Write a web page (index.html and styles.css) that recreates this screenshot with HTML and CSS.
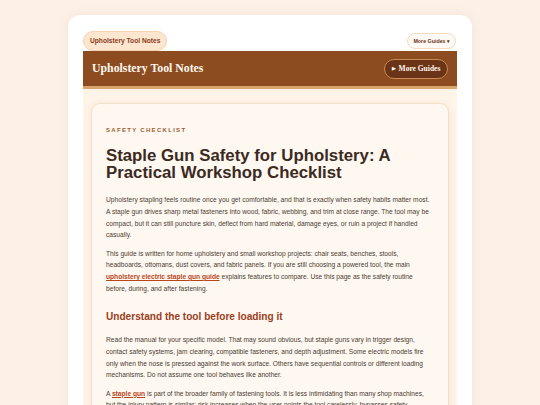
FILE: index.html
```html
<!DOCTYPE html>
<html lang="en">
<head>
<meta charset="utf-8">
<title>Staple Gun Safety for Upholstery</title>
<link rel="stylesheet" href="styles.css">
</head>
<body>
<div class="page">
  <div class="topbar">
    <a class="brand-pill" href="#">Upholstery Tool Notes</a>
    <button class="menu-pill" type="button">More Guides ▾</button>
  </div>
  <header class="masthead">
    <div class="site-title">Upholstery Tool Notes</div>
    <button class="guides-btn" type="button"><span class="tri">▶</span> More Guides</button>
  </header>
  <main class="main">
    <article class="article">
      <div class="eyebrow">Safety Checklist</div>
      <h1>Staple Gun Safety for Upholstery: A Practical Workshop Checklist</h1>
      <p>Upholstery stapling feels routine once you get comfortable, and that is exactly when safety habits matter most. A staple gun drives sharp metal fasteners into wood, fabric, webbing, and trim at close range. The tool may be compact, but it can still puncture skin, deflect from hard material, damage eyes, or ruin a project if handled casually.</p>
      <p>This guide is written for home upholstery and small workshop projects: chair seats, benches, stools, headboards, ottomans, dust covers, and fabric panels. If you are still choosing a powered tool, the main <a href="#">upholstery electric staple gun guide</a> explains features to compare. Use this page as the safety routine before, during, and after fastening.</p>
      <h2>Understand the tool before loading it</h2>
      <p>Read the manual for your specific model. That may sound obvious, but staple guns vary in trigger design, contact safety systems, jam clearing, compatible fasteners, and depth adjustment. Some electric models fire only when the nose is pressed against the work surface. Others have sequential controls or different loading mechanisms. Do not assume one tool behaves like another.</p>
      <p>A <a href="#">staple gun</a> is part of the broader family of fastening tools. It is less intimidating than many shop machines, but the injury pattern is similar: risk increases when the user points the tool carelessly, bypasses safety features, or works while distracted and tired.</p>
    </article>
  </main>
</div>
</body>
</html>
```

FILE: styles.css
```css
* { box-sizing: border-box; }
html, body { margin: 0; padding: 0; }
body {
  background: #fcf0e7;
  font-family: "Liberation Sans", Arial, sans-serif;
  padding-top: 15px;
}
.page {
  width: 404px;
  margin: 0 auto;
  background: #ffffff;
  border-radius: 12px 12px 0 0;
  padding: 15px 15px 0;
  box-shadow: 0 0 8px rgba(230, 190, 160, 0.25);
  min-height: 400px;
}
.topbar {
  display: flex;
  justify-content: space-between;
  align-items: center;
  height: 21px;
}
.brand-pill {
  display: inline-flex;
  align-items: center;
  height: 20px;
  padding: 0 6px;
  background: #fde6cf;
  border: 1px solid #f6d2b0;
  border-radius: 10px;
  color: #8a3b1c;
  font-size: 6.65px;
  font-weight: bold;
  text-decoration: none;
}
.menu-pill {
  height: 16px;
  padding: 0 5px;
  background: #fffaf5;
  border: 1px solid #f5dac2;
  border-radius: 8px;
  color: #6b3216;
  font-family: "Liberation Sans", Arial, sans-serif;
  font-size: 5.3px;
  font-weight: bold;
  margin-right: 1px;
}
.masthead {
  height: 38px;
  background: #8c4c20;
  border-bottom: 3px solid #d9a46e;
  display: flex;
  align-items: center;
  justify-content: space-between;
  padding: 0 9px 0 9px;
}
.site-title {
  font-family: "Liberation Serif", "Times New Roman", serif;
  font-weight: bold;
  font-size: 11.8px;
  color: #fff8ef;
}
.guides-btn {
  height: 20px;
  width: 64px;
  padding: 0;
  background: #6c3417;
  border: 1px solid #c68a58;
  border-radius: 10px;
  color: #fff8ef;
  font-family: "Liberation Serif", "Times New Roman", serif;
  font-weight: bold;
  font-size: 7.5px;
}
.guides-btn .tri { font-size: 4.5px; vertical-align: 1px; margin-right: 1px; }
.main {
  background: #fef4e8;
  padding: 14px 8px 0;
  min-height: 320px;
}
.article {
  background: #fff8f1;
  border: 1px solid #f4dfca;
  border-radius: 9px;
  padding: 22px 14px 20px;
  box-shadow: 0 1px 6px rgba(225, 185, 150, 0.25);
  color: #4a3b32;
}
.eyebrow {
  font-size: 6px;
  line-height: 8px;
  font-weight: bold;
  text-transform: uppercase;
  letter-spacing: 1.3px;
  color: #9c5c2e;
}
h1 {
  margin: 13px 0 12.5px;
  font-size: 16.8px;
  line-height: 17.3px;
  font-weight: bold;
  color: #3c2a1f;
}
p {
  margin: 0 0 6.6px;
  font-size: 6.65px;
  line-height: 11.7px;
}
a {
  color: #b7461d;
  font-weight: bold;
}
h2 {
  margin: 16px 0 11px;
  font-size: 10.1px;
  line-height: 13px;
  color: #9b3e1d;
}
```
